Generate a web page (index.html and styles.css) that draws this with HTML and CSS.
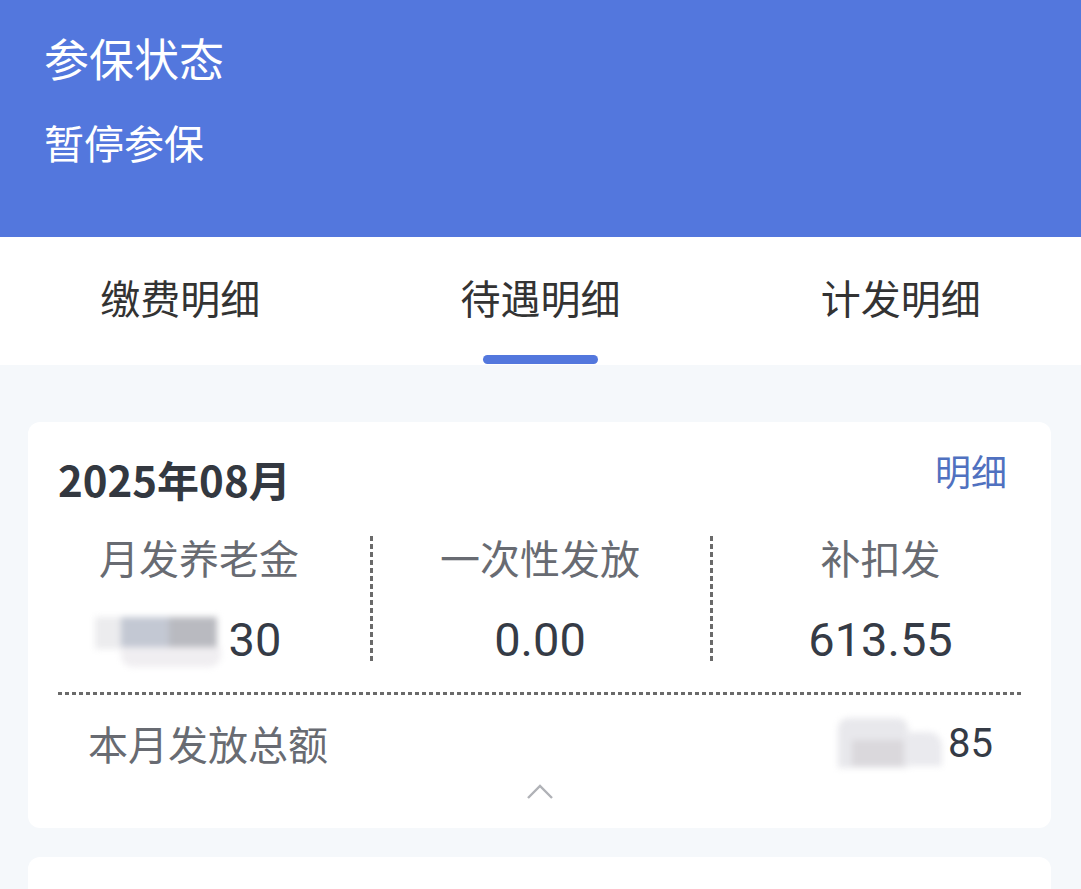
FILE: index.html
```html
<!DOCTYPE html>
<html lang="zh-CN">
<head>
  <meta charset="UTF-8">
  <title>待遇明细</title>
  <link rel="stylesheet" href="styles.css">
</head>
<body>

  <div class="header">
    <div class="headerTitle">参保状态</div>
    <div class="headerValue">暂停参保</div>
  </div>

  <div class="tabs">
    <div class="tab">缴费明细</div>
    <div class="tab active">待遇明细<span class="tabLine"></span></div>
    <div class="tab">计发明细</div>
  </div>

  <div class="content">
    <div class="card">
      <div class="cardHead">
        <span class="month">2025年08月</span>
        <span class="detailLink">明细</span>
      </div>

      <div class="stats">
        <div class="stat">
          <div class="statLabel">月发养老金</div>
          <div class="statValue"><span class="mask maskLeft"><i></i><i></i><i></i><i></i></span>30</div>
        </div>
        <div class="stat">
          <div class="statLabel">一次性发放</div>
          <div class="statValue">0.00</div>
        </div>
        <div class="stat">
          <div class="statLabel">补扣发</div>
          <div class="statValue">613.55</div>
        </div>
      </div>

      <div class="dashLine"></div>

      <div class="totalRow">
        <span class="totalLabel">本月发放总额</span>
        <span class="totalValue"><span class="mask maskRight"><i></i><i></i><i></i></span>85</span>
      </div>

      <div class="foldBtn">
        <svg width="28" height="18" viewBox="0 0 28 18">
          <path d="M2 16 L14 4 L26 16" fill="none" stroke="#b0b2b7" stroke-width="2.4"/>
        </svg>
      </div>
    </div>

    <div class="card nextCard"></div>
  </div>

</body>
</html>
```

FILE: styles.css
```css
html, body {
  margin: 0;
  height: 100%;
  overflow: hidden;
}

body {
  background: #f5f8fb;
  font-family: "Noto Sans CJK SC", "Roboto", sans-serif;
  color: #333;
}

.header {
  height: 237px;
  box-sizing: border-box;
  background: #5377dd;
  color: #fff;
  padding: 26px 44px 0;
}

.headerTitle {
  font-size: 45px;
  line-height: 64px;
}

.headerValue {
  margin-top: 24px;
  font-size: 40px;
  line-height: 56px;
}

.tabs {
  height: 128px;
  background: #fff;
  display: flex;
}

.tab {
  flex: 1;
  display: flex;
  flex-direction: column;
  align-items: center;
  padding-top: 31px;
  font-size: 40px;
  line-height: 58px;
  color: #333;
}

.tabLine {
  margin-top: 29px;
  width: 115px;
  height: 9px;
  border-radius: 5px;
  background: #5377dd;
}

.content {
  padding: 57px 30px 0 28px;
}

.card {
  background: #fff;
  border-radius: 12px;
}

.cardHead {
  display: flex;
  justify-content: space-between;
  align-items: center;
  padding: 28px 44px 0 30px;
  height: 56px;
}

.month {
  font-weight: bold;
  font-size: 42px;
  color: #333840;
}

.detailLink {
  margin-bottom: 16px;
  font-size: 36px;
  color: #5071c0;
}

.stats {
  display: grid;
  grid-template-columns: 342px 340px 1fr;
  margin-top: 30px;
}

.stat {
  text-align: center;
  height: 128px;
}

.stat + .stat {
  background-image: linear-gradient(#6a6a6a 60%, transparent 60%);
  background-size: 3px 8px;
  background-repeat: repeat-y;
  background-position: left top;
}

.statLabel {
  font-size: 40px;
  line-height: 42px;
  color: #686b72;
}

.statValue {
  margin-top: 37px;
  font-family: "Roboto", sans-serif;
  font-size: 47px;
  line-height: 50px;
  color: #353b46;
}

.mask {
  display: inline-block;
  position: relative;
  vertical-align: top;
  filter: blur(3px);
}

.mask i {
  position: absolute;
  display: block;
}

.maskLeft {
  width: 122px;
  height: 50px;
  margin-left: -22px;
  margin-right: 12px;
}

.maskLeft i:nth-child(1) { left: 0; top: 2px; width: 30px; height: 32px; background: #ececee; }
.maskLeft i:nth-child(2) { left: 26px; top: 2px; width: 50px; height: 32px; background: #c3c8d3; }
.maskLeft i:nth-child(3) { left: 74px; top: 2px; width: 48px; height: 32px; background: #b9bac0; }
.maskLeft i:nth-child(4) { left: 26px; top: 32px; width: 100px; height: 20px; background: #f0eef1; border-radius: 0 0 12px 12px; }

.maskRight {
  width: 104px;
  height: 50px;
  margin-right: 6px;
}

.maskRight i:nth-child(1) { left: 0; top: 0; width: 70px; height: 50px; background: #e8e8ec; border-radius: 10px 10px 0 0; }
.maskRight i:nth-child(2) { left: 14px; top: 22px; width: 56px; height: 26px; background: #dad8dc; }
.maskRight i:nth-child(3) { left: 66px; top: 14px; width: 38px; height: 34px; background: #eaeaee; border-radius: 0 14px 0 0; }

.dashLine {
  margin: 28px 30px 0;
  height: 3px;
  background-image: linear-gradient(90deg, #6a6a6a 60%, transparent 60%);
  background-size: 7px 3px;
}

.totalRow {
  display: flex;
  justify-content: space-between;
  align-items: center;
  padding: 19px 58px 0 60px;
  height: 58px;
}

.totalLabel {
  font-size: 40px;
  color: #686b72;
}

.totalValue {
  font-family: "Roboto", sans-serif;
  font-size: 40px;
  color: #353b46;
  display: flex;
  align-items: center;
}

.foldBtn {
  display: flex;
  justify-content: center;
  padding: 10px 0 28px;
  height: 18px;
}

.nextCard {
  margin-top: 29px;
  height: 80px;
}
```
